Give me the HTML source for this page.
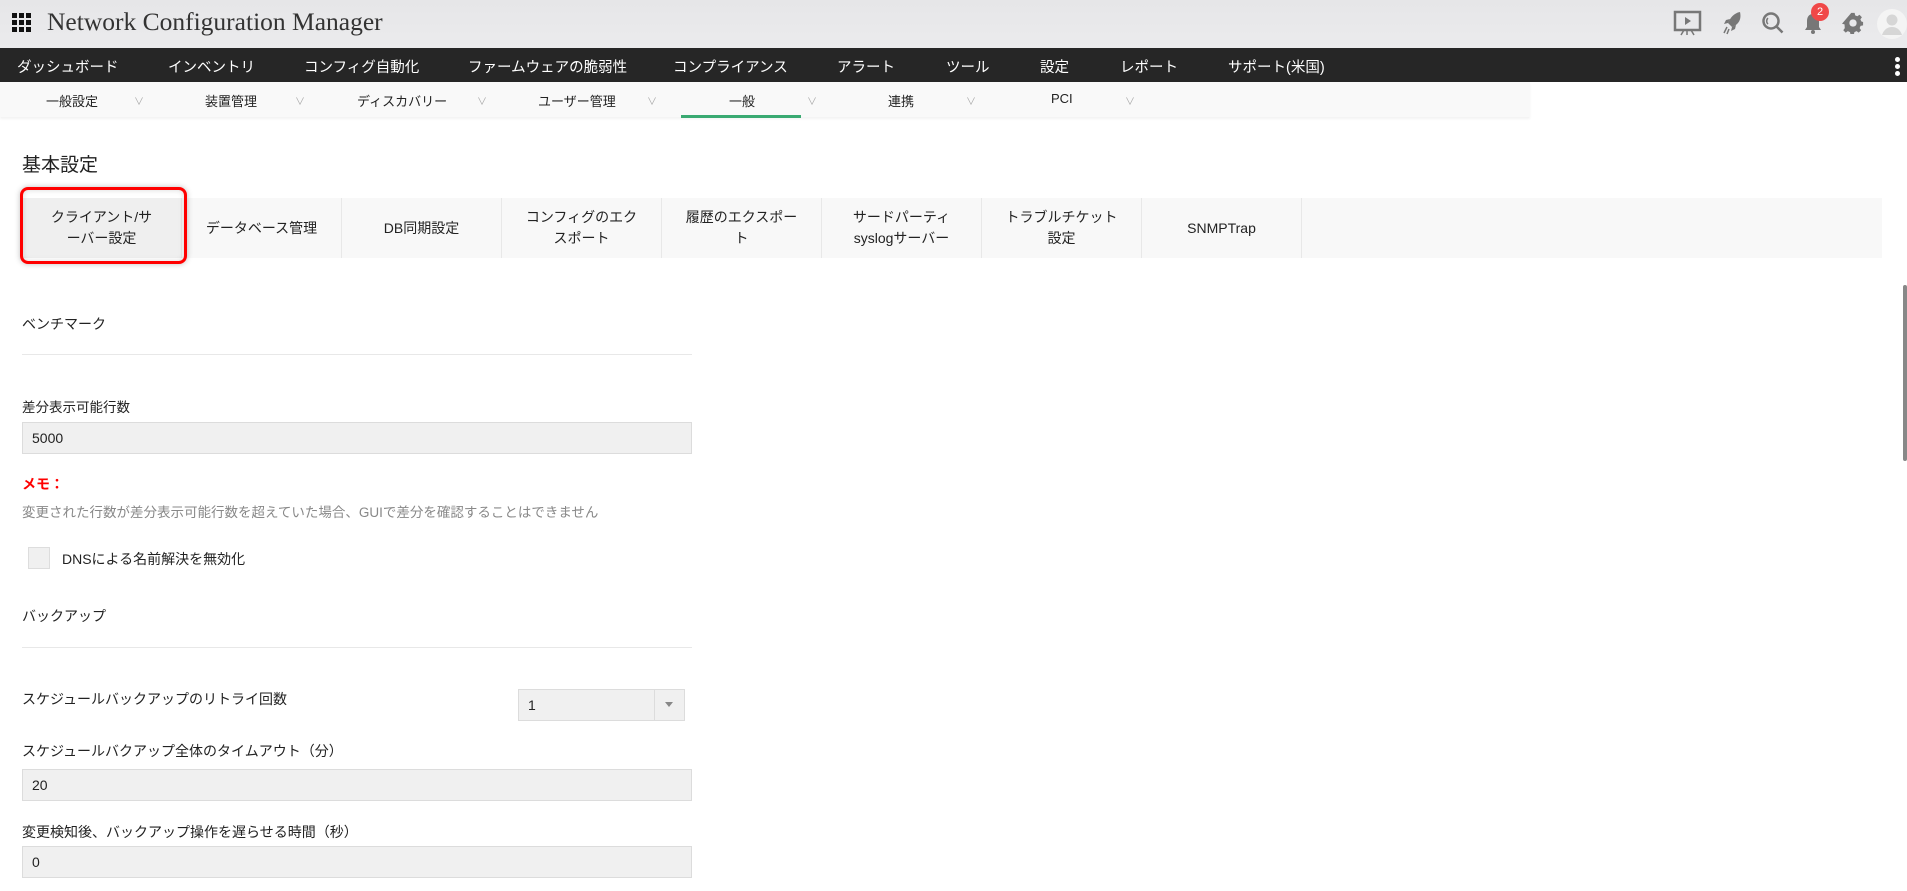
<!DOCTYPE html>
<html><head><meta charset="utf-8">
<style>
*{margin:0;padding:0;box-sizing:border-box}
body{width:1907px;height:891px;overflow:hidden;background:#fff;font-family:"Liberation Sans","Noto Sans CJK JP",sans-serif;color:#222;position:relative}
.a{position:absolute;white-space:nowrap}
#top{position:absolute;left:0;top:0;width:1907px;height:48px;background:linear-gradient(#e6e6e8,#ebebed)}
#nav{position:absolute;left:0;top:48px;width:1907px;height:34px;background:#262626}
#nav .a{color:#fff;font-size:14.5px;top:8px}
#sub{position:absolute;left:0;top:82px;width:1530px;height:35px;background:#f9f9f9;box-shadow:0 2px 2px rgba(0,0,0,.05)}
#sub .a{font-size:13px;top:9px;color:#222}
#sub .c{color:#aaa;font-size:10px;top:11px}
#tabs{position:absolute;left:22px;top:198px;width:1860px;height:60px;background:#f8f8f8}
.tab{position:absolute;top:0;height:60px;width:160px;border-right:1px solid #e8e8e8;display:flex;align-items:center;justify-content:center;text-align:center;font-size:14px;line-height:21px;color:#222}
.inp{position:absolute;left:22px;width:670px;height:32px;background:#f0f0f0;border:1px solid #dcdcdc;font-size:14px;padding:7px 9px;color:#222}
.lbl{font-size:14px;color:#222}
.hr{position:absolute;left:22px;width:670px;height:1px;background:#e8e8e8}
</style></head><body>
<div id="top"></div>
<svg class="a" style="left:12px;top:13px" width="19" height="19" viewBox="0 0 19 19" fill="#111">
<rect x="0" y="0" width="5" height="5"/><rect x="7" y="0" width="5" height="5"/><rect x="14" y="0" width="5" height="5"/>
<rect x="0" y="7" width="5" height="5"/><rect x="7" y="7" width="5" height="5"/><rect x="14" y="7" width="5" height="5"/>
<rect x="0" y="14" width="5" height="5"/><rect x="7" y="14" width="5" height="5"/><rect x="14" y="14" width="5" height="5"/></svg>
<div class="a" style="left:47px;top:7px;font-family:'Liberation Serif',serif;font-size:25.5px;color:#333">Network Configuration Manager</div>
<svg class="a" style="left:1672px;top:10px" width="32" height="26" viewBox="0 0 32 26" fill="none" stroke="#777" stroke-width="2.5"><rect x="3" y="2" width="25" height="18"/><path d="M13 7v8l6-4z" fill="#777" stroke="none"/><path d="M15 20v5M9 25l3-5M22 25l-3-5" stroke-width="1.5"/></svg>
<svg class="a" style="left:1722px;top:11px" width="20" height="24" viewBox="0 0 20 24" fill="#777"><path d="M18 1c-6 1-10 6-12 11l4 4c5-2 10-6 8-15z"/><path d="M6 12l-4 1 2-4 4-1zM10 16l-1 4 4-2 1-4z"/><path d="M5 16l-3 6M7 18l-2 5" stroke="#777" stroke-width="1.5"/></svg>
<svg class="a" style="left:1761px;top:11px" width="24" height="24" viewBox="0 0 24 24" fill="none" stroke="#777" stroke-width="2.5"><circle cx="10" cy="10" r="7.5"/><path d="M15.5 15.5l6 6"/><path d="M7 7a4 4 0 0 0 0 6" stroke-width="1.5"/></svg>
<svg class="a" style="left:1803px;top:12px" width="20" height="22" viewBox="0 0 20 22" fill="#777"><path d="M10 2c-4 0-6 3-6 7v6l-2 3h16l-2-3V9c0-4-2-7-6-7z"/><circle cx="10" cy="20" r="2"/></svg>
<div class="a" style="left:1811px;top:3px;width:18px;height:18px;border-radius:50%;background:#f04848;color:#fff;font-size:11px;text-align:center;line-height:18px">2</div>
<svg class="a" style="left:1842px;top:12px" width="22" height="22" viewBox="0 0 24 24" fill="#777"><path d="M10 1h4l.6 3 2.6 1.1 2.5-1.8 2.9 2.9-1.8 2.5L22 11.3l2 .6v4l-3 .6-1.1 2.6 1.8 2.5-2.9 2.9-2.5-1.8-2.6 1.1-.6 3h-4l-.6-3-2.6-1.1-2.5 1.8-2.9-2.9 1.8-2.5L2 14.6l-3-.6z" transform="scale(.92) translate(1 0)"/><circle cx="12" cy="12" r="4" fill="#e9e9eb"/></svg>
<svg class="a" style="left:1877px;top:9px" width="30" height="30" viewBox="0 0 30 30"><circle cx="15" cy="15" r="15" fill="#f4f4f4"/><circle cx="15" cy="11" r="5.5" fill="#d6d6d6"/><path d="M5 26c2-6 6-8 10-8s8 2 10 8z" fill="#d6d6d6"/></svg>

<div id="nav">
<div class="a" style="left:17px">ダッシュボード</div>
<div class="a" style="left:168px">インベントリ</div>
<div class="a" style="left:304px">コンフィグ自動化</div>
<div class="a" style="left:468px">ファームウェアの脆弱性</div>
<div class="a" style="left:673px">コンプライアンス</div>
<div class="a" style="left:837px">アラート</div>
<div class="a" style="left:946px">ツール</div>
<div class="a" style="left:1040px">設定</div>
<div class="a" style="left:1120px">レポート</div>
<div class="a" style="left:1228px">サポート(米国)</div>
<div class="a" style="left:1895px;top:9px;width:5px;height:5px;border-radius:50%;background:#fff"></div>
<div class="a" style="left:1895px;top:16px;width:5px;height:5px;border-radius:50%;background:#fff"></div>
<div class="a" style="left:1895px;top:23px;width:5px;height:5px;border-radius:50%;background:#fff"></div>
</div>

<div id="sub">
<div class="a" style="left:46px">一般設定</div><div class="a c" style="left:134px">∨</div>
<div class="a" style="left:205px">装置管理</div><div class="a c" style="left:295px">∨</div>
<div class="a" style="left:357px">ディスカバリー</div><div class="a c" style="left:477px">∨</div>
<div class="a" style="left:538px">ユーザー管理</div><div class="a c" style="left:647px">∨</div>
<div class="a" style="left:729px">一般</div><div class="a c" style="left:807px">∨</div>
<div class="a" style="left:888px">連携</div><div class="a c" style="left:966px">∨</div>
<div class="a" style="left:1051px">PCI</div><div class="a c" style="left:1125px">∨</div>
<div class="a" style="left:681px;top:33px;width:120px;height:3px;background:#3aaa72"></div>
</div>

<div class="a" style="left:22px;top:150px;font-size:19px;color:#222">基本設定</div>

<div id="tabs">
<div class="tab" style="left:0;background:#efefef">クライアント/サ<br>ーバー設定</div>
<div class="tab" style="left:160px">データベース管理</div>
<div class="tab" style="left:320px">DB同期設定</div>
<div class="tab" style="left:480px">コンフィグのエク<br>スポート</div>
<div class="tab" style="left:640px">履歴のエクスポー<br>ト</div>
<div class="tab" style="left:800px">サードパーティ<br>syslogサーバー</div>
<div class="tab" style="left:960px">トラブルチケット<br>設定</div>
<div class="tab" style="left:1120px">SNMPTrap</div>
</div>
<div class="a" style="left:20px;top:187px;width:167px;height:77px;border:3px solid #f00;border-radius:8px;box-shadow:0 0 6px rgba(0,0,0,.25), inset 0 0 6px rgba(0,0,0,.15)"></div>

<div class="a lbl" style="left:22px;top:314px">ベンチマーク</div>
<div class="hr" style="top:354px"></div>
<div class="a lbl" style="left:22px;top:396px;font-size:13.5px">差分表示可能行数</div>
<div class="inp" style="top:422px">5000</div>
<div class="a" style="left:22px;top:474px;font-size:14px;color:#f00;font-weight:bold">メモ：</div>
<div class="a" style="left:22px;top:501px;font-size:13.5px;color:#888">変更された行数が差分表示可能行数を超えていた場合、GUIで差分を確認することはできません</div>
<div class="a" style="left:28px;top:547px;width:22px;height:22px;background:#f0f0f0;border:1px solid #ddd"></div>
<div class="a lbl" style="left:62px;top:549px">DNSによる名前解決を無効化</div>
<div class="a lbl" style="left:22px;top:606px">バックアップ</div>
<div class="hr" style="top:647px"></div>
<div class="a lbl" style="left:22px;top:689px">スケジュールバックアップのリトライ回数</div>
<div class="a" style="left:518px;top:689px;width:167px;height:32px;background:#f0f0f0;border:1px solid #dcdcdc;font-size:14px;padding:7px 9px">1</div>
<div class="a" style="left:654px;top:690px;width:1px;height:30px;background:#dcdcdc"></div>
<div class="a" style="left:665px;top:702px;width:0;height:0;border-left:4px solid transparent;border-right:4px solid transparent;border-top:5px solid #888"></div>
<div class="a lbl" style="left:22px;top:741px">スケジュールバクアップ全体のタイムアウト（分）</div>
<div class="inp" style="top:769px">20</div>
<div class="a lbl" style="left:22px;top:822px">変更検知後、バックアップ操作を遅らせる時間（秒）</div>
<div class="inp" style="top:846px">0</div>

<div class="a" style="left:1903px;top:285px;width:4px;height:176px;background:#888;border-radius:2px"></div>
</body></html>
